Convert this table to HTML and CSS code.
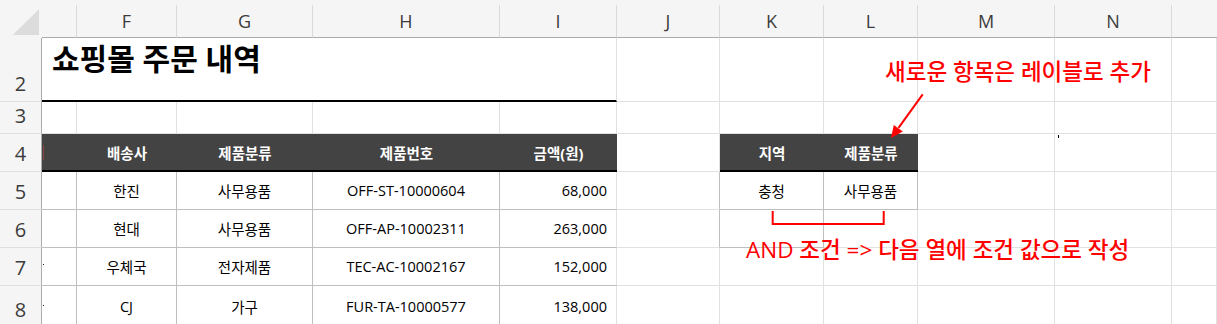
FILE: index.html
```html
<!DOCTYPE html>
<html lang="ko">
<head>
<meta charset="utf-8">
<title>쇼핑몰 주문 내역</title>
<link rel="stylesheet" href="styles.css">
</head>
<body>
<div class="sheet">
  <!-- column headers -->
  <div class="corner"><svg width="42" height="38" viewBox="0 0 42 38"><polygon points="12.7,35 39,35 39,9.3" fill="#dcdcdc"/></svg></div>
  <div class="ch"></div>
  <div class="ch">F</div>
  <div class="ch">G</div>
  <div class="ch">H</div>
  <div class="ch">I</div>
  <div class="ch">J</div>
  <div class="ch">K</div>
  <div class="ch">L</div>
  <div class="ch">M</div>
  <div class="ch">N</div>
  <div class="ch last"></div>

  <!-- row 2 -->
  <div class="rh">2</div>
  <div class="c title">쇼핑몰 주문 내역</div>
  <div class="c"></div><div class="c"></div><div class="c"></div><div class="c"></div><div class="c"></div><div class="c"></div>

  <!-- row 3 -->
  <div class="rh">3</div>
  <div class="c"></div><div class="c"></div><div class="c"></div><div class="c"></div><div class="c"></div>
  <div class="c"></div><div class="c"></div><div class="c"></div><div class="c"></div><div class="c"></div><div class="c"></div>

  <!-- row 4 -->
  <div class="rh">4</div>
  <div class="c th"></div>
  <div class="c th">배송사</div>
  <div class="c th">제품분류</div>
  <div class="c th">제품번호</div>
  <div class="c th">금액(원)</div>
  <div class="c"></div>
  <div class="c th">지역</div>
  <div class="c th">제품분류</div>
  <div class="c"></div><div class="c"></div><div class="c"></div>

  <!-- row 5 -->
  <div class="rh">5</div>
  <div class="c td"></div>
  <div class="c td">한진</div>
  <div class="c td">사무용품</div>
  <div class="c td">OFF-ST-10000604</div>
  <div class="c td num">68,000</div>
  <div class="c edge"></div>
  <div class="c td">충청</div>
  <div class="c td">사무용품</div>
  <div class="c"></div><div class="c"></div><div class="c"></div>

  <!-- row 6 -->
  <div class="rh">6</div>
  <div class="c td"></div>
  <div class="c td">현대</div>
  <div class="c td">사무용품</div>
  <div class="c td">OFF-AP-10002311</div>
  <div class="c td num">263,000</div>
  <div class="c edge"></div>
  <div class="c td"></div>
  <div class="c"></div>
  <div class="c"></div><div class="c"></div><div class="c"></div>

  <!-- row 7 -->
  <div class="rh">7</div>
  <div class="c td"></div>
  <div class="c td">우체국</div>
  <div class="c td">전자제품</div>
  <div class="c td">TEC-AC-10002167</div>
  <div class="c td num">152,000</div>
  <div class="c"></div><div class="c"></div><div class="c"></div>
  <div class="c"></div><div class="c"></div><div class="c"></div>

  <!-- row 8 -->
  <div class="rh">8</div>
  <div class="c td"></div>
  <div class="c td">CJ</div>
  <div class="c td">가구</div>
  <div class="c td">FUR-TA-10000577</div>
  <div class="c td num">138,000</div>
  <div class="c"></div><div class="c"></div><div class="c"></div>
  <div class="c"></div><div class="c"></div><div class="c"></div>

  <!-- overlays: annotations drawn over the sheet -->
  <div class="note note-top">새로운 항목은 레이블로 추가</div>
  <div class="note note-bottom">AND 조건 =&gt; 다음 열에 조건 값으로 작성</div>
  <svg class="shapes" width="1217" height="324" viewBox="0 0 1217 324">
    <polyline points="772.7,211 772.7,224 883.7,224 883.7,211" fill="none" stroke="#ff0000" stroke-width="2"/>
    <line x1="922.7" y1="94.3" x2="898.5" y2="127.8" stroke="#ff0000" stroke-width="2"/>
    <polygon points="891,138 902.8,131.6 893.8,125" fill="#ff0000"/>
  </svg>
  <span class="speck speck-red"></span>
  <span class="speck speck-7"></span>
  <span class="speck speck-8"></span>
  <span class="speck speck-m"></span>
</div>
</body>
</html>
```

FILE: styles.css
```css
html, body {
  margin: 0;
  padding: 0;
  background: #ffffff;
}

body {
  width: 1217px;
  height: 324px;
  overflow: hidden;
  font-family: "Open Sans", "Noto Sans CJK KR", sans-serif;
}

.sheet {
  position: relative;
  display: grid;
  grid-template-columns: 42px 35px 100px 136px 187px 117px 103px 104px 94px 137px 117px 1fr;
  grid-template-rows: 38px 64px 32px 38px 38px 38px 38px 42px;
  background: #f5f5f5;
  width: 1217px;
  height: 330px;
}

.corner {
  background: #f5f5f5;
}

.corner svg {
  display: block;
}

.ch {
  margin-top: 5px;
  border-right: 1px solid #dadada;
  border-bottom: 1px solid #ababab;
  display: flex;
  align-items: center;
  justify-content: center;
  font-family: "Open Sans", sans-serif;
  font-size: 18px;
  color: #3c3c3c;
}

.ch.last {
  border-right: none;
}

.rh {
  background: #f5f5f5;
  border-right: 1px solid #ababab;
  border-bottom: 1px solid #e0e0e0;
  display: flex;
  align-items: flex-end;
  justify-content: center;
  font-family: "Open Sans", sans-serif;
  font-size: 20px;
  line-height: 1;
  padding-bottom: 7px;
  box-sizing: border-box;
  color: #3c3c3c;
}

.c {
  background: #ffffff;
  border-right: 1px solid #e1e1e1;
  border-bottom: 1px solid #e1e1e1;
  box-sizing: border-box;
  display: flex;
  align-items: center;
  justify-content: center;
  font-size: 14.5px;
  color: #000;
  white-space: nowrap;
}

.title {
  grid-column: span 5;
  border-bottom: 2px solid #000;
  justify-content: flex-start;
  align-items: flex-start;
  padding: 3px 0 0 10px;
  font-size: 30px;
  font-weight: 700;
  line-height: 1.2;
}

.th {
  background: #434343;
  color: #ffffff;
  font-weight: 700;
  border-right: none;
  border-bottom: 2px solid #000;
}

.td {
  border-right: 1px solid #bfbfbf;
  border-bottom: 1px solid #bfbfbf;
}

.num {
  justify-content: flex-end;
  padding-right: 9px;
  border-right: 1px solid #e1e1e1;
}

.edge {
  border-right: 1px solid #bfbfbf;
}

.note {
  position: absolute;
  color: #ff0000;
  font-size: 22.5px;
  font-weight: 500;
  line-height: 1;
  white-space: nowrap;
}

.note-top {
  left: 885px;
  top: 61px;
}

.note-bottom {
  left: 746px;
  top: 239px;
}

.shapes {
  position: absolute;
  left: 0;
  top: 0;
  pointer-events: none;
}

.speck {
  position: absolute;
  width: 1px;
  height: 1px;
  background: #222;
}

.speck-red {
  left: 43px;
  top: 145px;
  height: 15px;
  background: #8c4545;
}

.speck-7 {
  left: 43px;
  top: 264px;
}

.speck-8 {
  left: 43px;
  top: 305px;
}

.speck-m {
  left: 1058px;
  top: 135px;
  height: 3px;
  background: #000;
}
```
